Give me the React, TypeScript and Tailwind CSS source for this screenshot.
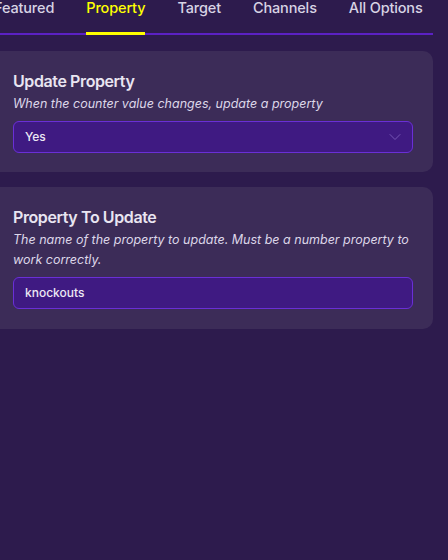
import { ChevronDown } from "lucide-react";

const tabs = ["Featured", "Property", "Target", "Channels", "All Options"];

const App = () => {
  return (
    <div className="w-[448px] h-[560px] overflow-hidden bg-[#2d1b4d] font-['Inter',sans-serif]">
      <div className="-ml-[16px] -mt-[2px] w-[449px]">
        <div className="flex gap-8 pl-[10px] border-b-2 border-[#5b21c4]">
          {tabs.map((tab) => (
            <div
              key={tab}
              className={`pb-[14px] -mb-[2px] text-[14.5px] leading-5 font-medium tracking-[-0.01em] whitespace-nowrap border-b-[3px] ${
                tab === "Property" ? "text-[#ffff00] border-[#ffff00]" : "text-[#d8d3e4] border-transparent"
              }`}
            >
              {tab}
            </div>
          ))}
        </div>

        <div className="mt-[16px] bg-[#3c2c58] rounded-[10px] pl-[29px] pr-[20px] pt-[18px] pb-[19px]">
          <p className="text-[16px] leading-6 font-semibold tracking-[-0.025em] text-[#e9e5f1]">Update Property</p>
          <p className="mt-[1px] text-[12.5px] leading-5 italic text-[#ddd7e9]">
            When the counter value changes, update a property
          </p>
          <div className="mt-[7px] flex items-center justify-between h-[32px] rounded-md border border-[#6a2fd6] bg-[#3f1a82] pl-[11px] pr-[7px]">
            <span className="text-[12px] font-medium text-[#ece8f4]">Yes</span>
            <ChevronDown className="w-5 h-5 text-[#7a5bb8]" strokeWidth={1.1} />
          </div>
        </div>

        <div className="mt-[15px] bg-[#3c2c58] rounded-[10px] pl-[29px] pr-[20px] pt-[18px] pb-[20px]">
          <p className="text-[16px] leading-6 font-semibold tracking-[-0.025em] text-[#e9e5f1]">Property To Update</p>
          <p className="mt-[1px] text-[12.5px] leading-5 italic text-[#ddd7e9]">
            The name of the property to update. Must be a number property to work correctly.
          </p>
          <div className="mt-[7px] flex items-center h-[32px] rounded-md border border-[#6a2fd6] bg-[#3f1a82] pl-[11px]">
            <span className="text-[12px] font-medium text-[#ece8f4]">knockouts</span>
          </div>
        </div>
      </div>
    </div>
  );
};

export default App;
